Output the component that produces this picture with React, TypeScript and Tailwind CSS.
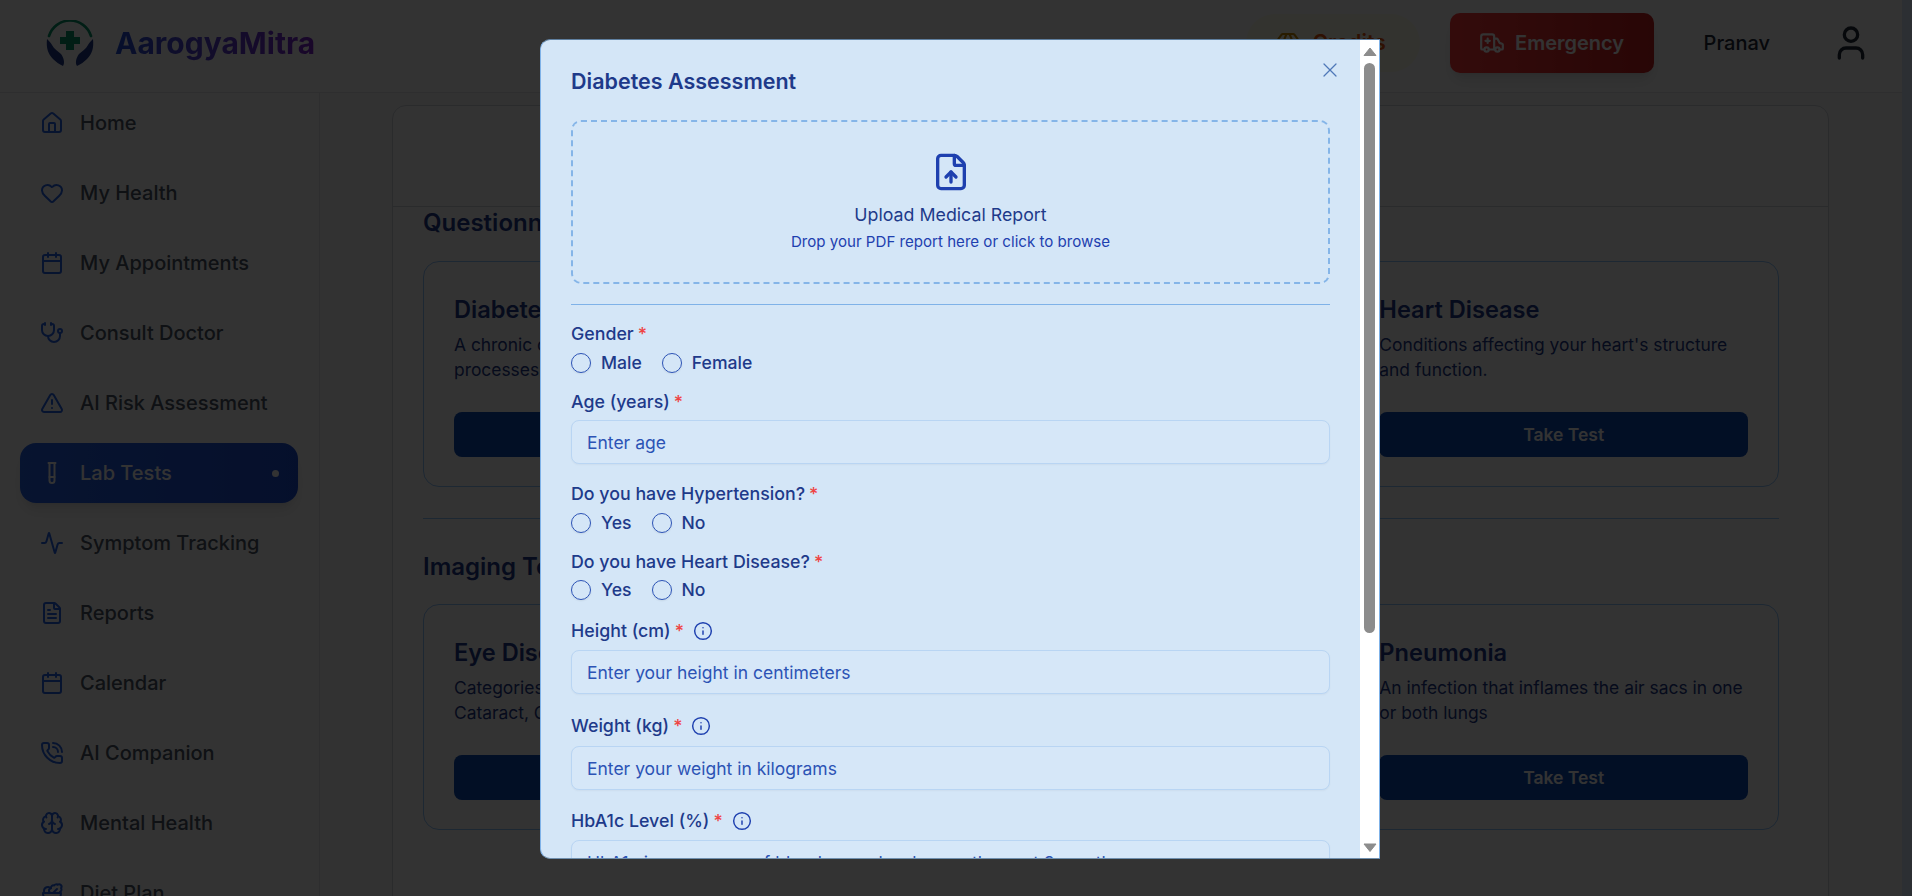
import {
  Activity,
  Ambulance,
  Brain,
  Calendar,
  FileText,
  FileUp,
  Gem,
  Heart,
  House,
  Info,
  PhoneCall,
  Salad,
  Stethoscope,
  TestTube,
  TriangleAlert,
  User,
  X,
} from 'lucide-react';

const navItems = [
  { label: 'Home', icon: House },
  { label: 'My Health', icon: Heart },
  { label: 'My Appointments', icon: Calendar },
  { label: 'Consult Doctor', icon: Stethoscope },
  { label: 'AI Risk Assessment', icon: TriangleAlert },
  { label: 'Lab Tests', icon: TestTube, active: true },
  { label: 'Symptom Tracking', icon: Activity },
  { label: 'Reports', icon: FileText },
  { label: 'Calendar', icon: Calendar },
  { label: 'AI Companion', icon: PhoneCall },
  { label: 'Mental Health', icon: Brain },
  { label: 'Diet Plan', icon: Salad },
];

function Logo() {
  return (
    <svg width="48" height="46" viewBox="0 0 48 46" fill="none">
      <path d="M3 16 A22 22 0 0 1 45 16" stroke="#059669" strokeWidth="2.6" strokeLinecap="round" />
      <path d="M20 11h8v6h6v7h-6v6h-8v-6h-6v-7h6z" fill="#059669" />
      <path d="M1 19c-1 9 1 15 6 20 3 3 6 5 10 7 2-3 1-8-2-12-3-3-7-5-9-9-1-2-3-4-5-6z" fill="#1e3a8a" />
      <path d="M47 19c1 9-1 15-6 20-3 3-6 5-10 7-2-3-1-8 2-12 3-3 7-5 9-9 1-2 3-4 5-6z" fill="#1e3a8a" />
    </svg>
  );
}

function Sidebar() {
  return (
    <aside className="w-[320px] shrink-0 border-r border-gray-200 bg-white pl-[20px] pr-[21px] flex flex-col gap-[10px]">
      {navItems.map((item) => {
        const Icon = item.icon;
        return (
          <div
            key={item.label}
            className={
              item.active
                ? 'h-[60px] shrink-0 flex items-center gap-[16px] rounded-[16px] px-[20px] bg-gradient-to-r from-[#2563eb] to-[#1d4ed8] text-white shadow-lg'
                : 'h-[60px] shrink-0 flex items-center gap-[16px] rounded-[16px] px-[20px] text-gray-600'
            }
          >
            <Icon size={24} className={item.active ? 'text-white' : 'text-[#2563eb]'} />
            <span className="text-[20px] font-medium">{item.label}</span>
            {item.active && <span className="ml-auto mr-[-1px] h-[7px] w-[7px] rounded-full bg-white" />}
          </div>
        );
      })}
    </aside>
  );
}

function TestCard({ title, text }: { title: string; text: string }) {
  return (
    <div className="h-[226px] rounded-[16px] border border-[#93c5fd] bg-white px-[30px] pt-[32px]">
      <h3 className="text-[23.6px] leading-[32px] font-semibold text-[#1e3a8a]">{title}</h3>
      <p className="mt-[6px] text-[17.4px] leading-[25px] text-[#1e3a8a]">{text}</p>
      <div className="mt-[30px] h-[45px] rounded-[8px] bg-[#0a4bb8] flex items-center justify-center pt-[1px] text-[17.5px] font-semibold text-white">
        Take Test
      </div>
    </div>
  );
}

function Required() {
  return <span className="text-[#ef4444] ml-[4px]">*</span>;
}

function Label({ text, info }: { text: string; info?: boolean }) {
  return (
    <div className="flex items-center h-[24px] text-[17.8px] font-medium text-[#1e3a8a]">
      <span>{text}</span>
      <Required />
      {info && <Info size={20} className="ml-[9px] text-[#1e40af]" strokeWidth={1.75} />}
    </div>
  );
}

function Radios({ options }: { options: string[] }) {
  return (
    <div className="flex items-center gap-[20px] h-[20px]">
      {options.map((o) => (
        <label key={o} className="flex items-center gap-[10px] text-[17.6px] font-medium text-[#1e3a8a]">
          <span className="h-[20px] w-[20px] rounded-full border border-[#2c53b5] shadow-[0_1px_2px_rgba(0,0,0,0.08)]" />
          {o}
        </label>
      ))}
    </div>
  );
}

function Field({ placeholder }: { placeholder: string }) {
  return (
    <div className="h-[44px] shrink-0 rounded-[8px] border border-[#b9d5f3] bg-[#d6e7f8] pl-[15px] pr-[16px] pt-[2px] flex items-center text-[17.5px] text-[#2c53b5] shadow-[0_1px_2px_rgba(0,0,0,0.04)] whitespace-nowrap">
      {placeholder}
    </div>
  );
}

function Scrollbar() {
  return (
    <div className="w-[19px] shrink-0 bg-white flex flex-col items-center">
      <svg width="14" height="10" viewBox="0 0 14 10" className="mt-[7px]">
        <path d="M7 1 13 8.5H1z" fill="#8c8c8c" stroke="#8c8c8c" strokeLinejoin="round" />
      </svg>
      <div className="mt-[6px] h-[570px] w-[11px] rounded-full bg-[#8c8c8c]" />
      <svg width="14" height="10" viewBox="0 0 14 10" className="mt-auto mb-[5px]">
        <path d="M1 1H13L7 8.5z" fill="#8c8c8c" stroke="#8c8c8c" strokeLinejoin="round" />
      </svg>
    </div>
  );
}

function AssessmentModal() {
  return (
    <div className="absolute left-[540px] top-[39px] h-[820px] w-[840px] flex rounded-l-[10px] overflow-hidden border border-[#7fb2e8] border-t-[#5f7f9f] border-b-[#6f8fae] bg-[#d4e6f7]">
      <div className="flex-1 min-w-0 overflow-hidden pl-[30px] pr-[30px] pt-[25px] relative">
        <X size={24} strokeWidth={1.25} className="absolute right-[18px] top-[18px] text-[#4f78b8]" />
        <h2 className="text-[21.5px] leading-[32px] font-semibold text-[#1e3a8a]">Diabetes Assessment</h2>
        <div className="mt-[23px] h-[164px] rounded-[10px] border-2 border-dashed border-[#85b5e8] flex flex-col items-center pt-[30px]">
          <FileUp size={40} className="text-[#1e40af]" />
          <p className="mt-[9px] text-[17.8px] leading-[28px] text-[#1e3a8a]">Upload Medical Report</p>
          <p className="mt-[3px] text-[15.1px] leading-[20px] text-[#1e40af]">Drop your PDF report here or click to browse</p>
        </div>
        <div className="mt-[20px] h-px bg-[#7fb2e8]" />

        <div className="mt-[17px]">
          <Label text="Gender" />
          <div className="mt-[7px]">
            <Radios options={['Male', 'Female']} />
          </div>
        </div>
        <div className="mt-[17px]">
          <Label text="Age (years)" />
          <div className="mt-[6px]">
            <Field placeholder="Enter age" />
          </div>
        </div>
        <div className="mt-[18px]">
          <Label text="Do you have Hypertension?" />
          <div className="mt-[7px]">
            <Radios options={['Yes', 'No']} />
          </div>
        </div>
        <div className="mt-[17px]">
          <Label text="Do you have Heart Disease?" />
          <div className="mt-[6px]">
            <Radios options={['Yes', 'No']} />
          </div>
        </div>
        <div className="mt-[19px]">
          <Label text="Height (cm)" info />
          <div className="mt-[7px]">
            <Field placeholder="Enter your height in centimeters" />
          </div>
        </div>
        <div className="mt-[20px]">
          <Label text="Weight (kg)" info />
          <div className="mt-[8px]">
            <Field placeholder="Enter your weight in kilograms" />
          </div>
        </div>
        <div className="mt-[19px]">
          <Label text="HbA1c Level (%)" info />
          <div className="mt-[7px]">
            <Field placeholder="HbA1c is a measure of blood sugar levels over the past 3 months" />
          </div>
        </div>
      </div>
      <Scrollbar />
    </div>
  );
}

export default function App() {
  return (
    <div className="relative h-[896px] overflow-hidden flex bg-gray-50 font-[Inter,sans-serif]">
      <div className="flex-1 min-w-0 flex flex-col">
        {/* Header */}
        <header className="h-[93px] shrink-0 border-b border-gray-200 bg-white flex items-center pl-[46px] pb-[6px]">
          <Logo />
          <span className="ml-[21px] text-[30px] font-bold bg-gradient-to-r from-[#1d4ed8] to-[#7e22ce] bg-clip-text text-transparent">
            AarogyaMitra
          </span>
          <div className="ml-auto flex items-center">
            <div className="h-[58px] w-[174px] rounded-full bg-[#fefce8] flex items-center pl-[30px] gap-[13px] text-[21px] font-semibold text-[#ea580c]">
              <Gem size={24} className="text-[#ca8a04]" />
              Credits
            </div>
            <div className="ml-[30px] h-[60px] w-[204px] rounded-[10px] bg-gradient-to-r from-[#ff3b3b] to-[#c81e1e] flex items-center justify-center gap-[10px] text-[20px] font-semibold text-white shadow-lg">
              <Ambulance size={26} />
              Emergency
            </div>
            <span className="ml-[50px] text-[20px] font-medium text-gray-800">Pranav</span>
            <User size={40} className="ml-[61px] mr-[31px] text-gray-800" />
          </div>
        </header>

        <div className="flex-1 min-h-0 flex">
          <Sidebar />

          {/* Main Content */}
          <main className="flex-1 min-w-0 pl-[72px] pr-[73px] pt-[12px]">
            <div className="h-[900px] rounded-t-[14px] border border-gray-300 bg-white">
              <div className="h-[101px] border-b border-gray-300" />
              <div className="pl-[30px] pr-[49px]">
                <h2 className="text-[24px] leading-[32px] font-semibold text-[#1e3a8a]">Questionnaire Tests</h2>
                <div className="mt-[22px] grid grid-cols-3 gap-[32px]">
                  <TestCard title="Diabetes" text="A chronic condition affecting how your body processes glucose." />
                  <div />
                  <TestCard title="Heart Disease" text="Conditions affecting your heart's structure and function." />
                </div>
                <div className="mt-[31px] h-px bg-[#93c5fd]" />
                <h2 className="mt-[32px] text-[24px] leading-[32px] font-semibold text-[#1e3a8a]">Imaging Tests</h2>
                <div className="mt-[21px] grid grid-cols-3 gap-[32px]">
                  <TestCard title="Eye Disease" text="Categories: Normal, Diabetic Retinopathy, Cataract, Glaucoma" />
                  <div />
                  <TestCard title="Pneumonia" text="An infection that inflames the air sacs in one or both lungs" />
                </div>
              </div>
            </div>
          </main>
        </div>
      </div>

      <div className="w-[10px] shrink-0 bg-[#dbeafe]" />

      {/* Modal overlay */}
      <div className="absolute inset-0 bg-black/80">
        <AssessmentModal />
      </div>
    </div>
  );
}
